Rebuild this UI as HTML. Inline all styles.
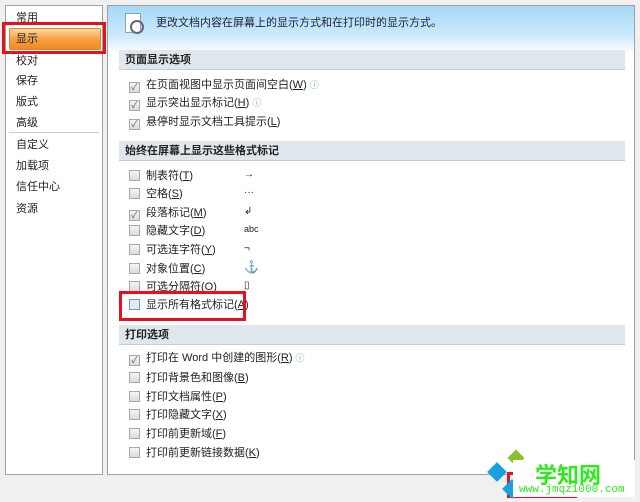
<!DOCTYPE html><html><head><meta charset="utf-8"><style>
body{margin:0;width:640px;height:502px;background:#f0f0f0;position:relative;overflow:hidden;font-family:"Liberation Sans","Noto Sans CJK SC",sans-serif;font-size:11px;color:#222}
.a{position:absolute}
#left{left:5px;top:5px;width:96px;height:468px;background:#fff;border:1px solid #a0a0a0}
#right{left:107px;top:5px;width:526px;height:468px;background:#fff;border:1px solid #a0a0a0;overflow:hidden}
.li{position:absolute;left:10px;font-size:11px}
.sec{position:absolute;left:11px;width:506px;height:20px;background:#dfe6ec;border-bottom:1px solid #c8ced4;font-weight:bold;line-height:20px;padding-left:6px;box-sizing:border-box;color:#222}
.row{position:absolute;left:21px;height:14px;line-height:14px}
.cb{display:inline-block;width:9px;height:9px;border:1px solid #a8a8a8;background:linear-gradient(#f4f4f4,#dcdcdc);vertical-align:-2px;margin-right:6px;position:relative;font-size:9px;line-height:9px;color:#4a5a9a;text-align:center}
.sym{position:absolute;left:136px;font-size:10px}
.red{position:absolute;border:3px solid #e8101c;box-sizing:border-box}
</style></head><body>
<div id="left" class="a">
<div class="li" style="top:3px">常用</div>
<div class="a" style="left:3px;top:22px;width:90px;height:20px;background:linear-gradient(#ffd9a0,#f8a044 50%,#f08a20);border:1px solid #d88a30;border-radius:2px"></div>
<div class="li" style="top:24px">显示</div>
<div class="li" style="top:46px">校对</div>
<div class="li" style="top:66px">保存</div>
<div class="li" style="top:87px">版式</div>
<div class="li" style="top:108px">高级</div>
<div class="a" style="left:3px;top:126px;width:90px;height:1px;background:#ccc"></div>
<div class="li" style="top:130px">自定义</div>
<div class="li" style="top:151px">加载项</div>
<div class="li" style="top:172px">信任中心</div>
<div class="li" style="top:194px">资源</div>
</div>
<div class="red" style="left:2px;top:22px;width:104px;height:32px"></div>
<div id="right" class="a">
<div class="a" style="left:0;top:0;width:526px;height:48px;background:linear-gradient(#a6d8fa,#cbe9fc 60%,#fff)"></div>
<div class="a" style="left:17px;top:7px;width:14px;height:18px;background:#fff;border:1px solid #8aa;"></div>
<div class="a" style="left:22px;top:14px;width:10px;height:10px;border:2px solid #667;border-radius:50%"></div>
<div class="a" style="left:48px;top:8px;color:#223">更改文档内容在屏幕上的显示方式和在打印时的显示方式。</div>
<div class="sec" style="top:44px">页面显示选项</div>
<div class="row" style="top:72px"><span class="cb">✓</span>在页面视图中显示页面间空白(<u>W</u>) <span style="color:#6a9ad0;font-size:9px">ⓘ</span></div>
<div class="row" style="top:90px"><span class="cb">✓</span>显示突出显示标记(<u>H</u>) <span style="color:#6a9ad0;font-size:9px">ⓘ</span></div>
<div class="row" style="top:109px"><span class="cb">✓</span>悬停时显示文档工具提示(<u>L</u>)</div>
<div class="sec" style="top:135px">始终在屏幕上显示这些格式标记</div>
<div class="row" style="top:163px"><span class="cb"></span>制表符(<u>T</u>)</div><div class="sym" style="top:163px">→</div>
<div class="row" style="top:181px"><span class="cb"></span>空格(<u>S</u>)</div><div class="sym" style="top:181px">···</div>
<div class="row" style="top:200px"><span class="cb">✓</span>段落标记(<u>M</u>)</div><div class="sym" style="top:200px">↲</div>
<div class="row" style="top:218px"><span class="cb"></span>隐藏文字(<u>D</u>)</div><div class="sym" style="top:218px;font-size:9px">abc</div>
<div class="row" style="top:237px"><span class="cb"></span>可选连字符(<u>Y</u>)</div><div class="sym" style="top:237px">¬</div>
<div class="row" style="top:256px"><span class="cb"></span>对象位置(<u>C</u>)</div><div class="sym" style="top:254px;font-size:12px">⚓</div>
<div class="row" style="top:274px"><span class="cb"></span>可选分隔符(<u>O</u>)</div><div class="sym" style="top:274px">▯</div>
<div class="row" style="top:292px"><span class="cb" style="background:#dcecfa;border-color:#6a9ad0"></span>显示所有格式标记(<u>A</u>)</div>
<div class="sec" style="top:319px">打印选项</div>
<div class="row" style="top:345px"><span class="cb">✓</span>打印在 Word 中创建的图形(<u>R</u>) <span style="color:#6a9ad0;font-size:9px">ⓘ</span></div>
<div class="row" style="top:365px"><span class="cb"></span>打印背景色和图像(<u>B</u>)</div>
<div class="row" style="top:384px"><span class="cb"></span>打印文档属性(<u>P</u>)</div>
<div class="row" style="top:402px"><span class="cb"></span>打印隐藏文字(<u>X</u>)</div>
<div class="row" style="top:421px"><span class="cb"></span>打印前更新域(<u>F</u>)</div>
<div class="row" style="top:440px"><span class="cb"></span>打印前更新链接数据(<u>K</u>)</div>
</div>
<div class="red" style="left:119px;top:291px;width:127px;height:30px"></div>
<div class="a" style="left:507px;top:472px;width:70px;height:26px;border:3px solid #e8101c;box-sizing:border-box"></div>
<div class="a" style="left:490px;top:465px;width:14px;height:14px;background:#1aa0e0;transform:rotate(45deg)"></div>
<div class="a" style="left:510px;top:452px;width:12px;height:12px;background:#88c030;transform:rotate(45deg)"></div>
<div class="a" style="left:505px;top:482px;width:14px;height:14px;background:#1aa0e0;transform:rotate(45deg)"></div>
<div class="a" style="left:513px;top:460px;width:122px;height:37px;background:#fff"></div>
<div class="a" style="left:535px;top:458px;color:#2ee820;font-size:22px;font-weight:bold">学知网</div>
<div class="a" style="left:519px;top:484px;color:#2ee820;font-size:11px;font-family:'Liberation Mono',monospace">www.jmqz1000.com</div>
</body></html>
